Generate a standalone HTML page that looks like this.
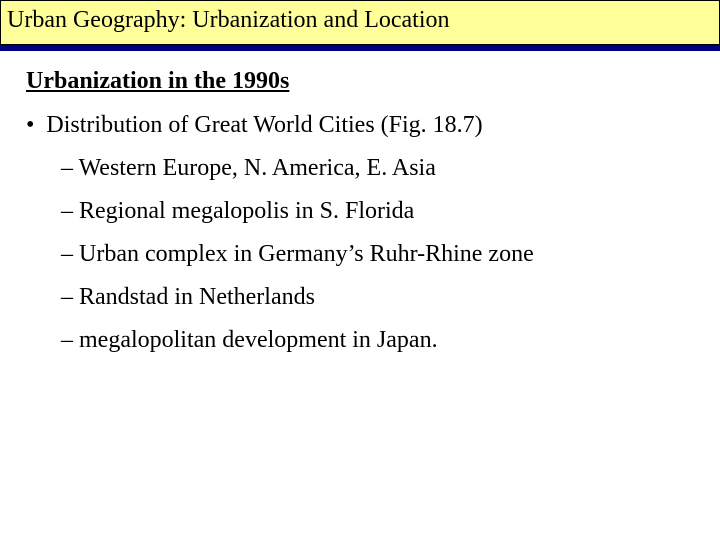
<!DOCTYPE html>
<html><head><style>
body{margin:0;width:720px;height:540px;background:#fff;position:relative;overflow:hidden;font-family:"Liberation Serif",serif;color:#000}
.hd{position:absolute;left:0;top:0;width:718px;height:43px;background:#ffff99;border:1px solid #000;}
.hd span{position:absolute;left:6px;top:6px;font-size:24px;white-space:nowrap}
.bar{position:absolute;left:0;top:45px;width:720px;height:6px;background:#000080}
.t{position:absolute;font-size:24px;white-space:nowrap;line-height:28px}
</style></head><body>
<div class="hd"><span>Urban Geography: Urbanization and Location</span></div>
<div class="bar"></div>
<div class="t" style="left:26px;top:67px;font-weight:bold;text-decoration:underline">Urbanization in the 1990s</div>
<div class="t" style="left:26px;top:111px">•&nbsp; Distribution of Great World Cities (Fig. 18.7)</div>
<div class="t" style="left:61px;top:154px">– Western Europe, N. America, E. Asia</div>
<div class="t" style="left:61px;top:197px">– Regional megalopolis in S. Florida</div>
<div class="t" style="left:61px;top:240px">– Urban complex in Germany’s Ruhr-Rhine zone</div>
<div class="t" style="left:61px;top:283px">– Randstad in Netherlands</div>
<div class="t" style="left:61px;top:326px">– megalopolitan development in Japan.</div>
</body></html>
